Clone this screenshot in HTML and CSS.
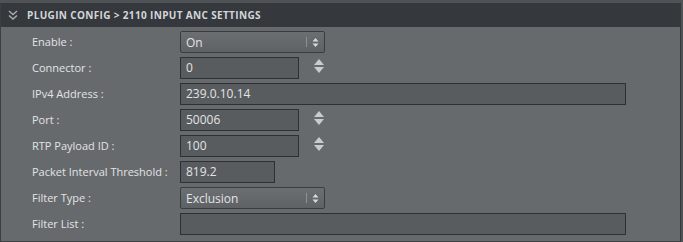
FILE: index.html
```html
<!DOCTYPE html>
<html lang="en">
<head>
    <meta charset="UTF-8">
    <title>Plugin Config</title>
    <link rel="stylesheet" href="styles.css">
</head>
<body>
    <div class="panel">
        <div class="panel-header">
            <svg class="collapse-icon" width="10" height="10" viewBox="0 0 10 10">
                <path d="M1 1 L5 4.5 L9 1 M1 5.5 L5 9 L9 5.5" fill="none" stroke="#a9adb1" stroke-width="1.4"/>
            </svg>
            <span class="panel-title">Plugin Config &gt; 2110 Input ANC Settings</span>
        </div>

        <div class="form">
            <label>Enable :</label>
            <div class="field">
                <div class="select">
                    <span>On</span>
                    <span class="select-arrows"><i class="sep"></i><svg width="7" height="11" viewBox="0 0 7 11"><path d="M0.5 4.5 L3.5 1 L6.5 4.5 Z M0.5 6.5 L3.5 10 L6.5 6.5 Z" fill="#d6d8da"/></svg></span>
                </div>
            </div>

            <label>Connector :</label>
            <div class="field">
                <div class="input short">0</div>
                <div class="spinner"><span class="up"></span><span class="down"></span></div>
            </div>

            <label>IPv4 Address :</label>
            <div class="field">
                <div class="input long">239.0.10.14</div>
            </div>

            <label>Port :</label>
            <div class="field">
                <div class="input short">50006</div>
                <div class="spinner"><span class="up"></span><span class="down"></span></div>
            </div>

            <label>RTP Payload ID :</label>
            <div class="field">
                <div class="input short">100</div>
                <div class="spinner"><span class="up"></span><span class="down"></span></div>
            </div>

            <label>Packet Interval Threshold :</label>
            <div class="field">
                <div class="input tiny">819.2</div>
            </div>

            <label>Filter Type :</label>
            <div class="field">
                <div class="select">
                    <span>Exclusion</span>
                    <span class="select-arrows"><i class="sep"></i><svg width="7" height="11" viewBox="0 0 7 11"><path d="M0.5 4.5 L3.5 1 L6.5 4.5 Z M0.5 6.5 L3.5 10 L6.5 6.5 Z" fill="#d6d8da"/></svg></span>
                </div>
            </div>

            <label>Filter List :</label>
            <div class="field">
                <div class="input long"></div>
            </div>
        </div>
    </div>
</body>
</html>
```

FILE: styles.css
```css
:root {
    --panel-bg: #676a6d;
    --header-bg: #35393d;
    --input-bg: #595c5f;
    --input-border: #2e3134;
    --text: #e2e4e6;
}

* {
    margin: 0;
    padding: 0;
    box-sizing: border-box;
}

body {
    background: #505356;
    font-family: 'Open Sans', 'Noto Sans', sans-serif;
    font-size: 11px;
    color: var(--text);
}

.panel {
    width: 681px;
    height: 239px;
    margin-top: 3px;
    background: var(--panel-bg);
    border-left: 1px solid #3d4043;
    border-right: 1px solid #35383b;
    border-bottom: 1px solid #3d4043;
}

.panel-header {
    height: 24px;
    background: var(--header-bg);
    display: flex;
    align-items: center;
    padding-left: 7px;
}

.collapse-icon {
    margin-right: 9px;
}

.panel-title {
    font-weight: bold;
    font-size: 10px;
    text-transform: uppercase;
    letter-spacing: 0.35px;
    color: #d3d6d9;
}

.form {
    display: grid;
    grid-template-columns: 148px auto;
    row-gap: 4px;
    padding: 4px 0 0 31px;
}

.form label {
    height: 22px;
    line-height: 22px;
    white-space: nowrap;
}

.field {
    display: flex;
    align-items: center;
    height: 22px;
}

.input {
    height: 22px;
    line-height: 20px;
    padding-left: 5px;
    background: var(--input-bg);
    border: 1px solid var(--input-border);
    font-size: 12px;
}

.input.short { width: 119px; }
.input.long { width: 446px; }
.input.tiny { width: 95px; }

.select {
    width: 145px;
    height: 22px;
    display: flex;
    align-items: center;
    justify-content: space-between;
    padding: 0 5px 0 5px;
    background: linear-gradient(#6c6f72, #5f6265);
    border: 1px solid #3a3d40;
    border-radius: 2px;
    font-size: 12px;
}

.select-arrows {
    display: flex;
    align-items: center;
    gap: 5px;
}

.select-arrows .sep {
    display: block;
    width: 1px;
    height: 10px;
    background: #8d9093;
}

.spinner {
    margin: -4px 0 0 15px;
    display: flex;
    flex-direction: column;
    gap: 2px;
}

.spinner span {
    display: block;
    width: 0;
    height: 0;
    border-left: 5.5px solid transparent;
    border-right: 5.5px solid transparent;
}

.spinner .up { border-bottom: 6px solid #c9cccf; }
.spinner .down { border-top: 6px solid #c9cccf; }
```
